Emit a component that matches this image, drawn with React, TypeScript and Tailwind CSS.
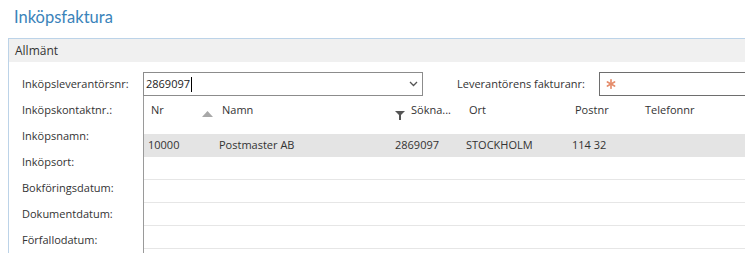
import React from "react";

const labels = [
  "Inköpskontaktnr.:",
  "Inköpsnamn:",
  "Inköpsort:",
  "Bokföringsdatum:",
  "Dokumentdatum:",
  "Förfallodatum:",
];

export default function App() {
  return (
    <div
      className="relative w-[745px] h-[253px] overflow-hidden bg-white text-[#333]"
      style={{ fontFamily: '"Segoe UI", "Open Sans", "Noto Sans", sans-serif' }}
    >
      <div
        className="h-[38px] pl-[14px] pt-[4px] text-[16.5px] leading-[26px] text-[#3a83ba]"
        style={{ fontFamily: 'Lato, "Open Sans", sans-serif' }}
      >
        Inköpsfaktura
      </div>
      <div className="ml-[8px] border-l border-t border-[#bcd3e8] h-[215px]">
        <div className="h-[23px] bg-[#f0f0f0] pl-[6px] flex items-center text-[12px]">
          Allmänt
        </div>
        <div className="pt-[9px] pl-[13px] text-[11px]">
          <div className="h-[26px] flex items-center">
            <div className="w-[121px] shrink-0 whitespace-nowrap">Inköpsleverantörsnr:</div>
            <div className="w-[280px] shrink-0 h-[24px] border border-[#8c8c8c] flex items-center pl-[2px] pr-[4px]">
              <span className="text-[#222]">2869097</span>
              <span className="w-px h-[15px] bg-black ml-[1px]" />
              <span className="flex-1" />
              <svg width="9" height="6" viewBox="0 0 9 6">
                <polyline points="1,1 4.5,4.5 8,1" fill="none" stroke="#555" strokeWidth="1.3" />
              </svg>
            </div>
            <div className="w-[34px] shrink-0" />
            <div className="w-[142px] shrink-0 whitespace-nowrap">Leverantörens fakturanr:</div>
            <div className="w-[160px] shrink-0 h-[24px] border border-[#6e6e6e] flex items-center pl-[6px]">
              <svg width="10" height="10" viewBox="0 0 12 12">
                <g stroke="#e58d6c" strokeWidth="2" strokeLinecap="round">
                  <line x1="6" y1="1" x2="6" y2="11" />
                  <line x1="1.7" y1="3.5" x2="10.3" y2="8.5" />
                  <line x1="1.7" y1="8.5" x2="10.3" y2="3.5" />
                </g>
              </svg>
            </div>
          </div>
          {labels.map((l) => (
            <div key={l} className="h-[26px] flex items-center">
              {l}
            </div>
          ))}
        </div>
      </div>

      {/* Lookup dropdown */}
      <div className="absolute left-[143px] top-[96px] right-0 bottom-0 bg-white border-l border-[#9a9a9a] text-[11px]">
        <div className="h-[38px] flex items-start pt-[6px]">
          <div className="w-[71px] shrink-0 pl-[7px] flex items-start">
            <span>Nr</span>
            <svg className="ml-[38px] mt-[9px]" width="11" height="6" viewBox="0 0 11 6">
              <polygon points="5.5,0 11,6 0,6" fill="#a8a8a8" />
            </svg>
          </div>
          <div className="w-[176px] shrink-0 pl-[7px]">Namn</div>
          <div className="w-[71px] shrink-0 pl-[4px] flex items-start">
            <svg className="mt-[9px] mr-[6px]" width="10" height="9" viewBox="0 0 10 9">
              <polygon points="0,0 10,0 6,4 6,9 4,9 4,4" fill="#555" />
            </svg>
            <span>Sökna...</span>
          </div>
          <div className="w-[106px] shrink-0 pl-[7px]">Ort</div>
          <div className="w-[70px] shrink-0 pl-[7px]">Postnr</div>
          <div className="pl-[7px]">Telefonnr</div>
        </div>
        <div className="h-[23px] bg-[#e4e4e4] flex items-center">
          <div className="w-[71px] shrink-0 pl-[4px]">10000</div>
          <div className="w-[176px] shrink-0 pl-[4px]">Postmaster AB</div>
          <div className="w-[71px] shrink-0 pl-[4px]">2869097</div>
          <div className="w-[106px] shrink-0 pl-[4px]">STOCKHOLM</div>
          <div className="w-[70px] shrink-0 pl-[4px]">114 32</div>
        </div>
        {[0, 1, 2, 3].map((i) => (
          <div key={i} className="h-[23px] border-b border-[#e6e6e6]" />
        ))}
      </div>
    </div>
  );
}
